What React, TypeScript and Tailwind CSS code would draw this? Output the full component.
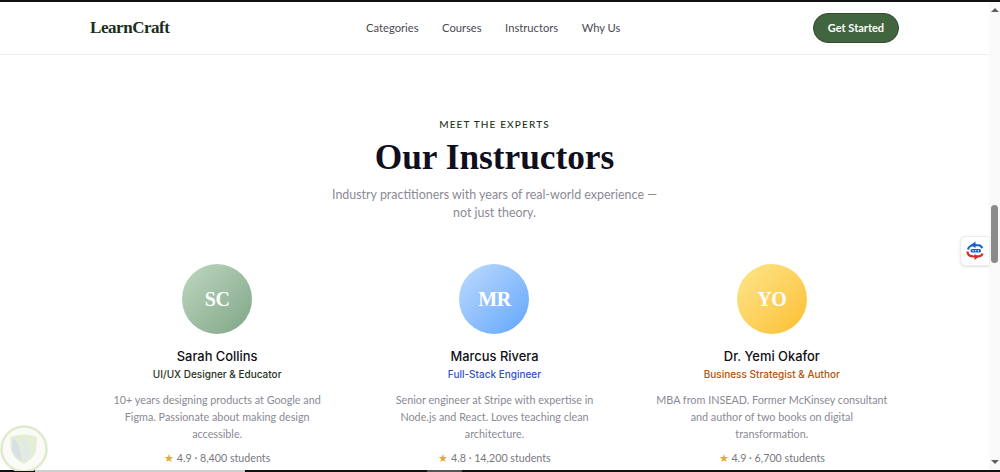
const LINKS = ["Categories", "Courses", "Instructors", "Why Us"];

const INSTRUCTORS = [
  {
    initials: "SC",
    name: "Sarah Collins",
    role: "UI/UX Designer & Educator",
    roleColor: "text-[#1f3320]",
    avatar: "bg-gradient-to-br from-[#c0d8c0] to-[#7fa587]",
    bio: ["10+ years designing products at Google and", "Figma. Passionate about making design", "accessible."],
    stats: "4.9 · 8,400 students",
  },
  {
    initials: "MR",
    name: "Marcus Rivera",
    role: "Full-Stack Engineer",
    roleColor: "text-[#2f52c8]",
    avatar: "bg-gradient-to-br from-[#bfdbfe] to-[#60a5fa]",
    bio: ["Senior engineer at Stripe with expertise in", "Node.js and React. Loves teaching clean", "architecture."],
    stats: "4.8 · 14,200 students",
  },
  {
    initials: "YO",
    name: "Dr. Yemi Okafor",
    role: "Business Strategist & Author",
    roleColor: "text-[#b45309]",
    avatar: "bg-gradient-to-br from-[#fde68a] to-[#fbbf24]",
    bio: ["MBA from INSEAD. Former McKinsey consultant", "and author of two books on digital", "transformation."],
    stats: "4.9 · 6,700 students",
  },
];

function Scrollbar() {
  return (
    <div className="w-[11px] shrink-0 bg-[#f9f9f9] flex flex-col items-center justify-between pt-[6px] pb-[6px] relative">
      <div className="w-0 h-0 border-x-[4px] border-x-transparent border-b-[4px] border-b-[#606060]" />
      <div className="absolute top-[203px] left-[2px] w-[7px] h-[58px] rounded-full bg-[#8a8a8a]" />
      <div className="w-0 h-0 border-x-[4px] border-x-transparent border-t-[4px] border-t-[#606060]" />
    </div>
  );
}

function SwapWidget() {
  return (
    <div className="absolute right-[11px] top-[236px] w-[29px] h-[30px] bg-white border border-[#ececec] border-r-0 rounded-l-md shadow-sm flex items-center justify-center">
      <svg width="20" height="22" viewBox="0 0 20 22" fill="none">
        <path d="M3 9.5 C3.5 6.5 7 5 10 5 L15 5.5 L17.5 8" stroke="#1d5fc4" strokeWidth="2.2" />
        <path d="M10.5 1.5 L10.5 8 L5.5 5 Z" fill="#1d5fc4" />
        <path d="M2.5 11.5 C2.5 15 5.5 16.5 9 16.5 L12 16.5 C14.5 16.5 17 15.5 17.5 13.5" stroke="#d22a22" strokeWidth="2.2" />
        <path d="M9.5 20 L9.5 14 L14 16.8 Z" fill="#d22a22" />
        <rect x="5.5" y="9" width="10.5" height="3.4" rx="1.5" fill="#1d5fc4" />
        <circle cx="8" cy="10.7" r="0.7" fill="#fff" />
        <circle cx="10.7" cy="10.7" r="0.7" fill="#fff" />
        <circle cx="13.4" cy="10.7" r="0.7" fill="#fff" />
      </svg>
    </div>
  );
}

function Watermark() {
  return (
    <div className="absolute left-0 top-[425px] pointer-events-none">
      <svg width="48" height="46" viewBox="0 0 48 46" fill="none">
        <circle cx="24" cy="24" r="22.5" fill="#fafbf7" stroke="#dfeacf" strokeWidth="2.5" />
        <path d="M10 12 Q24 7 37 12 L36 26 Q33 34 24 39 Q14 34 11 26 Z" fill="#e4eed4" />
        <path d="M13 12 Q21 20 22 36 Q14 32 12 25 Z" fill="#d6e0e6" />
        <path d="M20 11 Q31 18 30 32 Q27 36 24 37 Q24 22 20 11 Z" fill="#e0e8ea" />
      </svg>
    </div>
  );
}

function InstructorCard({ item }: { item: (typeof INSTRUCTORS)[number] }) {
  return (
    <div className="flex flex-col items-center text-center">
      <div
        className={`w-[70px] h-[70px] rounded-full flex items-center justify-center text-white font-['Liberation_Serif',serif] font-bold text-[20px] tracking-[-0.5px] ${item.avatar}`}
      >
        {item.initials}
      </div>
      <h3 className="mt-[14px] font-['Inter',sans-serif] text-[12.9px] leading-[18px] font-medium text-[#0f0f14]">
        {item.name}
      </h3>
      <div className={`font-['Inter',sans-serif] text-[10px] leading-[16px] font-medium ${item.roleColor}`}>
        {item.role}
      </div>
      <p className="mt-[9px] text-[10.8px] leading-[17px] text-[#8a8a94] whitespace-nowrap">
        {item.bio.map((line) => (
          <span key={line} className="block">
            {line}
          </span>
        ))}
      </p>
      <div className="mt-[8px] text-[10.7px] leading-[16px] text-[#777780]">
        <span className="text-[#e2a93b]">★</span> {item.stats}
      </div>
    </div>
  );
}

export default function App() {
  return (
    <div className="relative w-[1000px] h-[472px] overflow-hidden bg-white flex flex-col font-['Lato',sans-serif]">
      <div className="h-[2px] shrink-0 bg-[#111]" />
      <div className="flex flex-1 min-h-0">
        <div className="flex-1 min-w-0 flex flex-col">
          {/* Nav */}
          <nav className="h-[53px] shrink-0 bg-white border-b border-[#eeeeee] pl-[90px] pr-[90px] flex items-center justify-between">
            <div className="font-['Liberation_Serif',serif] font-bold text-[17px] tracking-[-0.45px] text-[#1a2e1a]">
              LearnCraft
            </div>
            <div className="flex items-center gap-[23.5px] pt-[1px] ml-[4px] text-[11.2px] text-[#4a4a52]">
              {LINKS.map((link) => (
                <span key={link}>{link}</span>
              ))}
            </div>
            <button className="h-[30px] w-[86px] rounded-full bg-[#41663f] border border-[#2f4a2d] text-white text-[11px] font-bold">
              Get Started
            </button>
          </nav>

          {/* Instructors */}
          <section className="flex-1 min-h-0 px-[90px] pt-[62px] overflow-hidden">
            <div className="text-center text-[10px] leading-[14px] font-medium tracking-[1.15px] text-[#1f3320]">
              MEET THE EXPERTS
            </div>
            <h2 className="mt-[4px] text-center font-['Liberation_Serif',serif] font-bold text-[35.3px] leading-[46px] text-[#0f0f1e]">
              Our Instructors
            </h2>
            <p className="mt-[5px] text-center text-[12.45px] leading-[18px] text-[#8a8a94]">
              Industry practitioners with years of real-world experience —
              <br />
              not just theory.
            </p>
            <div className="mt-[42px] grid grid-cols-3 gap-[23px]">
              {INSTRUCTORS.map((item) => (
                <InstructorCard key={item.name} item={item} />
              ))}
            </div>
          </section>
        </div>
        <Scrollbar />
      </div>
      <div className="h-[2px] shrink-0 bg-[#111] flex">
        <div className="ml-[35px] w-[210px] bg-[#cfcfcf]" />
        <div className="ml-[182px] w-[35px] bg-[#555]" />
      </div>
      <SwapWidget />
      <Watermark />
    </div>
  );
}
